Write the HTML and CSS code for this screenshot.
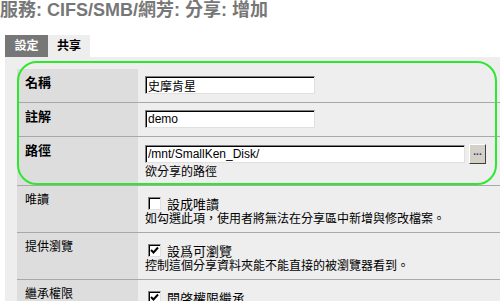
FILE: index.html
```html
<!DOCTYPE html>
<html lang="zh-Hant">
<head>
    <meta charset="UTF-8">
    <title>服務: CIFS/SMB/網芳: 分享: 增加</title>
    <link rel="stylesheet" href="styles.css">
</head>
<body>
    <h1 class="page-title">服務: CIFS/SMB/網芳: 分享: 增加</h1>

    <div class="tabs">
        <span class="tab active">設定</span>
        <span class="tab">共享</span>
    </div>

    <div class="panel">
        <div class="highlight"></div>

        <div class="row">
            <div class="label strong">名稱</div>
            <div class="value"><input class="text-input" type="text" value="史摩肯星"></div>
        </div>

        <div class="row">
            <div class="label strong">註解</div>
            <div class="value"><input class="text-input" type="text" value="demo"></div>
        </div>

        <div class="row tall">
            <div class="label strong">路徑</div>
            <div class="value">
                <div class="path-line">
                    <input class="text-input wide" type="text" value="/mnt/SmallKen_Disk/">
                    <button class="browse">...</button>
                </div>
                <div class="hint">欲分享的路徑</div>
            </div>
        </div>

        <div class="row check-row">
            <div class="label">唯讀</div>
            <div class="value">
                <div class="check-line"><span class="check"></span>設成唯讀</div>
                <div class="hint">如勾選此項，使用者將無法在分享區中新增與修改檔案。</div>
            </div>
        </div>

        <div class="row check-row">
            <div class="label">提供瀏覽</div>
            <div class="value">
                <div class="check-line">
                    <span class="check"><svg width="9" height="9" viewBox="0 0 9 9"><path d="M1 4 L3.5 6.5 L8 1.5" fill="none" stroke="#000" stroke-width="2"/></svg></span>設爲可瀏覽
                </div>
                <div class="hint">控制這個分享資料夾能不能直接的被瀏覽器看到。</div>
            </div>
        </div>

        <div class="row check-row last">
            <div class="label">繼承權限</div>
            <div class="value">
                <div class="check-line">
                    <span class="check"><svg width="9" height="9" viewBox="0 0 9 9"><path d="M1 4 L3.5 6.5 L8 1.5" fill="none" stroke="#000" stroke-width="2"/></svg></span>開啓權限繼承
                </div>
            </div>
        </div>
    </div>
</body>
</html>
```

FILE: styles.css
```css
body {
    margin: 0;
    width: 500px;
    font-family: "Liberation Sans", "Noto Sans CJK TC", sans-serif;
    font-size: 12px;
    color: #000;
    background: #fff;
    overflow: hidden;
}

.page-title {
    margin: 0;
    height: 35px;
    font-size: 18px;
    line-height: 20px;
    font-weight: bold;
    color: #777;
}

.tabs {
    display: flex;
    margin-left: 5px;
    height: 22px;
}
.tab {
    width: 42px;
    line-height: 22px;
    text-align: center;
    font-weight: bold;
    background: #eee;
}
.tab.active {
    width: 43px;
    background: #777;
    color: #fff;
}

.panel {
    position: relative;
    margin-left: 5px;
    padding: 12px 0 0 12px;
    background: #eee;
    height: 232px;
}

.highlight {
    position: absolute;
    left: 12px;
    top: 4px;
    width: 480px;
    height: 124px;
    box-sizing: border-box;
    border: 2px solid #2ee82e;
    border-radius: 20px;
    pointer-events: none;
}

.row {
    display: grid;
    grid-template-columns: 121px 1fr;
    border-bottom: 1px solid #a8a8a8;
    height: 33px;
}
.row.tall { height: 48px; }
.row.check-row { height: 46px; }
.row.last { border-bottom: 0; }

.label {
    background: #ddd;
    padding: 6px 8px 0;
    line-height: 16px;
}
.label.strong {
    font-weight: bold;
    font-size: 13px;
}

.value {
    padding: 7px 0 0 7px;
}

.text-input {
    display: block;
    box-sizing: border-box;
    width: 170px;
    height: 18px;
    margin: 0;
    padding: 0 2px;
    border: 1px solid;
    border-color: #808080 #e0e0e0 #e0e0e0 #808080;
    box-shadow: inset 1px 1px 0 #000;
    background: #fff;
    font-family: "Liberation Sans", "Noto Sans CJK TC", sans-serif;
    font-size: 12px;
    color: #000;
    outline: none;
}
.text-input.wide { width: 320px; }

.path-line {
    display: flex;
    align-items: center;
    gap: 4px;
    height: 20px;
}

.browse {
    box-sizing: border-box;
    width: 17px;
    height: 20px;
    margin: 0;
    padding: 0 0 4px;
    border: 1px solid;
    border-color: #fff #404040 #404040 #fff;
    background: #d4d0c8;
    font-size: 10px;
    font-weight: bold;
    line-height: 10px;
    color: #1a3a8a;
}

.hint {
    line-height: 16px;
    white-space: nowrap;
}

.check-row .value { padding-top: 9px; }

.check-line {
    display: flex;
    align-items: center;
    height: 16px;
    padding-left: 3px;
    font-size: 13px;
}
.check {
    display: inline-flex;
    align-items: center;
    justify-content: center;
    box-sizing: border-box;
    width: 13px;
    height: 13px;
    margin-right: 6px;
    border: 1px solid;
    border-color: #808080 #e0e0e0 #e0e0e0 #808080;
    box-shadow: inset 1px 1px 0 #000;
    background: #fff;
}
```
